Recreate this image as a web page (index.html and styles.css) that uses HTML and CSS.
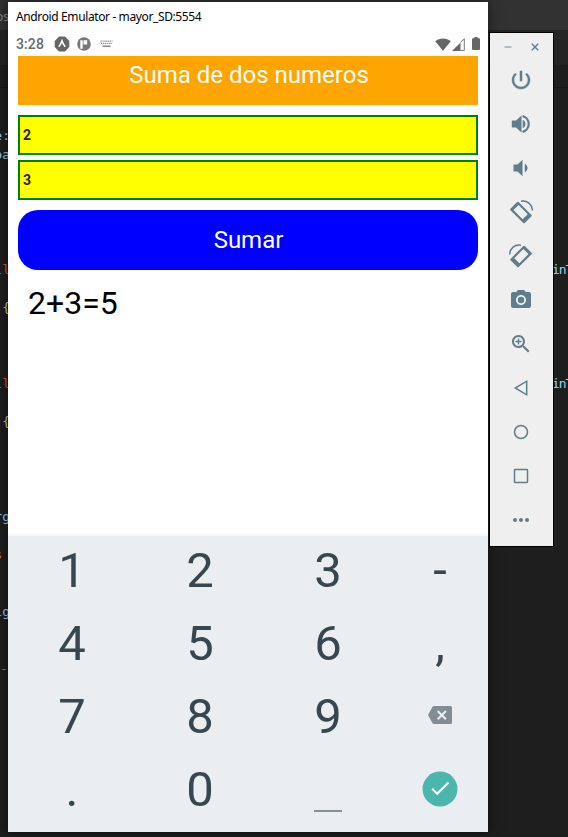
FILE: index.html
```html
<!DOCTYPE html>
<html lang="es">
<head>
<meta charset="utf-8">
<title>Android Emulator</title>
<link rel="stylesheet" href="styles.css">
</head>
<body>
<div class="desktop">
  <div class="editor">
    <div class="tabs"><span>os</span></div>
    <div class="crumbs"></div>
    <div class="code">
      <div class="line"><span class="l blue">e:</span></div>
      <div class="line"><span class="l blue">pa</span></div>
      <div class="line skip5"><span class="l red">ll</span><span class="r blue">inT</span></div>
      <div class="line skip1"><span class="l tan">({</span></div>
      <div class="line skip3"><span class="l red">ll</span><span class="r blue">inT</span></div>
      <div class="line skip1"><span class="l tan">({</span></div>
      <div class="line skip4"><span class="l blue">rg</span></div>
      <div class="line skip1"><span class="l orange">s&nbsp;</span></div>
      <div class="line skip2"><span class="l blue">ig</span></div>
      <div class="line skip2"><span class="l gray">-&gt;</span></div>
    </div>
  </div>

  <main class="phone">
    <div class="titlebar"><span>Android Emulator - mayor_SD:5554</span></div>
    <div class="status">
      <span class="clock">3:28</span>
      <svg class="s-expo" width="16" height="16" viewBox="0 0 16 16"><path fill="#666" d="M5 .5h6L15.300 5v6L11 15.500H5L.7 11V5z"/><path d="M4.800 10.800Q6.800 8.300 8 5Q9.200 8.300 11.200 10.800" fill="none" stroke="#fff" stroke-width="1.700"/></svg>
      <svg class="s-app" width="14" height="14" viewBox="0 0 14 14"><circle cx="7" cy="7" r="6.800" fill="#777"/><path fill="#fff" d="M3.300 3.200h2.400v8.500H3.300zM6.500 3.200h3.700v4.400H6.500z"/></svg>
      <svg class="s-kb" width="13" height="8" viewBox="0 0 13 8"><path d="M.5 1.200h12M1 3.400h11" stroke="#888" stroke-width="1.300" stroke-dasharray="1.200 .7"/><path d="M2.500 6.200h8" stroke="#888" stroke-width="1.500"/></svg>
      <span class="grow"></span>
      <svg width="16" height="13" viewBox="0 0 16 13"><path fill="#666" d="M.2 3.200C4.600-.4 11.400-.4 15.800 3.200L8 12.800z"/></svg>
      <svg class="s-cell" width="13" height="13" viewBox="0 0 13 13"><path fill="#666" d="M0 13 8.500 4.500V13z"/><path d="M8.500 4.200 12.300.9v11.500H8.500" fill="none" stroke="#777"/></svg>
      <svg class="s-bat" width="8" height="13" viewBox="0 0 8 13"><path fill="#666" d="M2.300 0h3.400v1.200H7q1 0 1 1V12q0 1-1 1H1q-1 0-1-1V2.200q0-1 1-1h1.300z"/></svg>
    </div>
    <section class="app">
      <h1>Suma de dos numeros</h1>
      <div class="field first">2</div>
      <div class="field">3</div>
      <div class="button">Sumar</div>
      <p class="result">2+3=5</p>
    </section>
    <section class="keypad">
      <span>1</span><span>2</span><span>3</span><span>-</span>
      <span>4</span><span>5</span><span>6</span><span>,</span>
      <span>7</span><span>8</span><span>9</span>
      <span class="key-icon"><svg width="24" height="18" viewBox="0 0 24 18"><path fill="#818d92" d="M6 0h16.500Q24 0 24 1.500v15q0 1.500-1.500 1.500H6Q5 18 4.400 17L0 9 4.400 1Q5 0 6 0z"/><path d="m9.700 5 8.200 8.200m0-8.200-8.200 8.200" stroke="#ebeef1" stroke-width="2.100"/></svg></span>
      <span>.</span><span>0</span><span><i class="space"></i></span>
      <span class="key-icon enter"><svg width="36" height="36" viewBox="0 0 36 36"><circle cx="18" cy="18" r="17.500" fill="#4db6ac"/><path d="m10.200 17.700 5 5 11.300-11.300" fill="none" stroke="#fff" stroke-width="2.100"/></svg></span>
    </section>
  </main>

  <aside class="tools">
    <div class="controls">
      <svg width="8" height="8" viewBox="0 0 8 8"><path d="M.5 4h7" stroke="#9fb0b9" stroke-width="1.600"/></svg>
      <svg width="8" height="8" viewBox="0 0 8 8"><path d="m.8.8 6.400 6.400m0-6.400L.8 7.200" stroke="#607d8b" stroke-width="1.400"/></svg>
    </div>
    <svg class="tool power" viewBox="0 0 24 24"><path d="M13 3h-2v10h2V3zm4.830 2.170-1.420 1.420C17.990 7.860 19 9.810 19 12c0 3.870-3.130 7-7 7s-7-3.130-7-7c0-2.190 1.010-4.140 2.580-5.420L6.170 5.170C4.230 6.820 3 9.260 3 12c0 4.970 4.030 9 9 9s9-4.030 9-9c0-2.740-1.230-5.180-3.170-6.830z"/></svg>
    <svg class="tool" viewBox="0 0 24 24"><path d="M2.800 8.400v7.200h4.200l5.500 5V3.400L7 8.400zm13.700 3.600c0-1.770-1.020-3.290-2.800-4.300v8.600c1.780-1 2.800-2.530 2.800-4.300z"/><path d="M13.500 4.200a8 8 0 0 1 0 15.600" fill="none" stroke="#607d8b" stroke-width="2.300"/></svg>
    <svg class="tool" viewBox="0 0 24 24"><path d="M4.500 8.600v6.800h4l5 4.800V3.800l-5 4.800zM18.500 12c0-1.770-1.020-3.290-2.700-4.200v8.400c1.680-.91 2.700-2.430 2.700-4.200z"/></svg>
    <svg class="tool" viewBox="0 0 24 24"><path fill-rule="evenodd" d="M8.200 2q.7-.7 1.400 0L22.500 14.900q.6.700 0 1.400l-6.800 6.800q-.7.600-1.400 0L1.400 10.200q-.6-.7 0-1.400zM9.600 5 4.500 10 13.600 19.200 18.700 14.200z"/><path class="stroke" d="M12 1.200C18-.2 23.300 4.700 23.300 10.500"/></svg>
    <svg class="tool" viewBox="0 0 24 24"><g transform="matrix(-1 0 0 1 24 0)"><path fill-rule="evenodd" d="M8.200 2q.7-.7 1.400 0L22.500 14.900q.6.700 0 1.400l-6.800 6.800q-.7.600-1.400 0L1.400 10.200q-.6-.7 0-1.400zM9.600 5 4.500 10 13.600 19.200 18.700 14.200z"/><path class="stroke" d="M12 1.200C18-.2 23.300 4.700 23.300 10.500"/></g></svg>
    <svg class="tool" viewBox="0 0 24 24"><circle cx="12" cy="12" r="3.200"/><path d="M9 2 7.170 4H4c-1.100 0-2 .9-2 2v12c0 1.100.9 2 2 2h16c1.100 0 2-.9 2-2V6c0-1.100-.9-2-2-2h-3.170L15 2H9zm3 15c-2.760 0-5-2.240-5-5s2.240-5 5-5 5 2.240 5 5-2.240 5-5 5z"/></svg>
    <svg class="tool" viewBox="0 0 24 24"><path d="M15.500 14h-.79l-.28-.27C15.410 12.590 16 11.110 16 9.500 16 5.910 13.090 3 9.500 3S3 5.910 3 9.500 5.910 16 9.500 16c1.610 0 3.090-.59 4.230-1.570l.27.280v.79l5 4.990L20.490 19l-4.990-5zm-6 0C7.010 14 5 11.990 5 9.500S7.010 5 9.500 5 14 7.010 14 9.500 11.990 14 9.500 14zM12.500 10.200h-2.300v2.300H8.800v-2.300H6.500V8.800h2.300V6.500h1.400v2.300h2.300z"/></svg>
    <svg class="tool" viewBox="0 0 24 24"><path class="stroke" d="M17.700 5.200v13.600L6.200 12z"/></svg>
    <svg class="tool" viewBox="0 0 24 24"><circle class="stroke" cx="12" cy="12" r="6.500"/></svg>
    <svg class="tool" viewBox="0 0 24 24"><rect class="stroke" x="5.500" y="5.500" width="13" height="13" rx=".7"/></svg>
    <svg class="tool" viewBox="0 0 24 24"><circle cx="6" cy="12" r="2"/><circle cx="12" cy="12" r="2"/><circle cx="18" cy="12" r="2"/></svg>
  </aside>
</div>
</body>
</html>
```
FILE: styles.css
```css
* { box-sizing: border-box; }
body { margin: 0; }
svg { display: block; flex: none; }

.desktop {
  position: relative;
  width: 568px;
  height: 837px;
  overflow: hidden;
  background: #1e1e1e;
  font-family: Roboto, sans-serif;
}

.tabs {
  height: 30px;
  background: #323233;
  color: #8c8c8c;
  font: 12px/33px "Noto Sans", sans-serif;
}
.tabs span { display: block; margin-left: -4px; }
.crumbs {
  height: 58px;
  background: linear-gradient(#252526 35px, #1e1e1e 35px);
  border-bottom: 1px solid #151515;
}
.code {
  padding-top: 38px;
  font: 13px/19px "DejaVu Sans Mono", monospace;
}
.line { display: flex; justify-content: space-between; height: 19px; }
.l { display: flex; justify-content: flex-end; width: 10px; overflow: hidden; }
.r { width: 16px; overflow: hidden; letter-spacing: -1.1px; }
.skip1 { margin-top: 19px; }
.skip2 { margin-top: 38px; }
.skip3 { margin-top: 57px; }
.skip4 { margin-top: 76px; }
.skip5 { margin-top: 96px; }
.blue { color: #8fd2fb; }
.red { color: #d0584a; }
.tan { color: #d3c69c; }
.orange { color: #d38a32; }
.gray { color: #808080; }

.phone {
  position: absolute;
  left: 8px;
  top: 2px;
  width: 480px;
  height: 830px;
  display: flex;
  flex-direction: column;
  background: #fff;
  box-shadow: 0 0 12px rgba(0, 0, 0, .55);
}
.titlebar {
  height: 30px;
  padding-left: 8px;
  color: #000;
  font: 12px/30px "Noto Sans", sans-serif;
  letter-spacing: -0.38px;
  white-space: nowrap;
}
.status {
  display: flex;
  align-items: center;
  height: 22px;
  padding: 2px 8px 0;
  color: #6a6a6a;
}
.clock { width: 38px; font-size: 14px; font-weight: 500; line-height: 24px; letter-spacing: .1px; }
.s-app { margin-left: 7px; }
.s-kb { margin-left: 9px; }
.grow { flex: 1; }
.s-cell { margin-left: 1px; }
.s-bat { margin-left: 7px; margin-top: -2px; }

.app {
  flex: 1;
  display: flex;
  flex-direction: column;
  padding: 2px 10px 0;
}
h1 {
  height: 49px;
  margin: 0 0 10px;
  padding-left: 2px;
  background: #ffa500;
  color: #fff;
  font-size: 24px;
  font-weight: 400;
  line-height: 38px;
  text-align: center;
}
.field {
  height: 40px;
  margin-bottom: 10px;
  padding-left: 3px;
  border: 2px solid #008000;
  background: #ff0;
  color: #222;
  font-size: 14px;
  font-weight: 700;
  line-height: 37px;
}
.field.first { margin-bottom: 5px; }
.button {
  height: 60px;
  padding-left: 1px;
  border-radius: 20px;
  background: #00f;
  color: #fff;
  font-size: 24px;
  line-height: 60px;
  text-align: center;
}
.result {
  margin: 10px 0 0 10px;
  color: #000;
  font-size: 32px;
  line-height: 46px;
}

.keypad {
  display: grid;
  grid-template-columns: repeat(3, 128px) 96px;
  grid-template-rows: repeat(4, 73px);
  height: 298px;
  border-top: 2px solid #f6f7f8;
  background: #ebeef1;
  color: #37474f;
  font-size: 49px;
  line-height: 69px;
}
.keypad span {
  display: flex;
  align-items: center;
  justify-content: center;
  padding-bottom: 4px;
}
.keypad .key-icon { padding: 0 0 7px; }
.keypad .enter { padding: 0 1px 6px 0; }
.space { width: 28px; height: 2px; margin-top: 42px; background: #879297; }

.tools {
  position: absolute;
  left: 489px;
  top: 32px;
  width: 65px;
  height: 515px;
  display: flex;
  flex-direction: column;
  align-items: center;
  gap: 20px;
  padding-right: 1px;
  border: 1px solid #000;
  background: #efefef;
}
.controls {
  display: flex;
  gap: 19px;
  height: 15px;
  padding: 10px 0 0 1px;
}
.tool { width: 24px; height: 24px; fill: #607d8b; }
.power { stroke: #607d8b; stroke-width: .5; }
.stroke { fill: none; stroke: #607d8b; stroke-width: 1.5; }
```
